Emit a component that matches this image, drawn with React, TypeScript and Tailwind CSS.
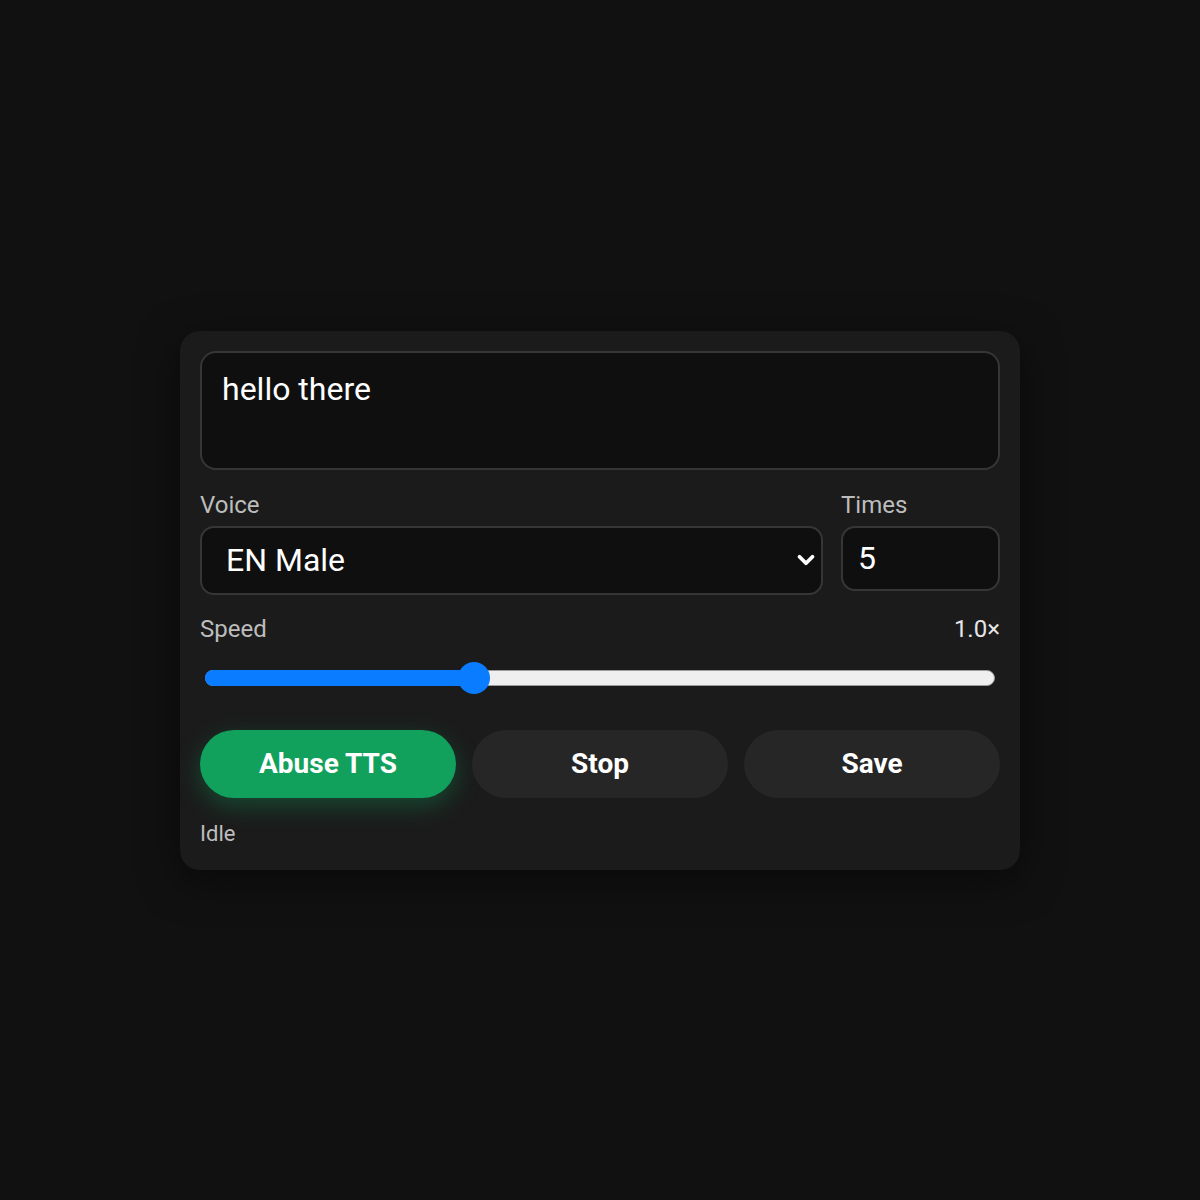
import { ChevronDown } from "lucide-react";

export default function App() {
  const speed = 1.0;
  const pct = 34;

  return (
    <div className="min-h-[1200px] w-full bg-[#111111] flex items-center justify-center font-['Roboto',sans-serif]">
      <div className="w-[840px] bg-[#1b1b1b] rounded-[20px] px-5 pt-5 pb-[22px] shadow-[0_10px_40px_rgba(0,0,0,0.5)]">
        <div className="h-[119px] bg-[#0f0f0f] border-2 border-[#363636] rounded-[16px] px-5 py-[14px] text-[32px] text-white leading-[44px]">
          hello there
        </div>

        <div className="flex gap-[18px] mt-[21px]">
          <div className="flex-1">
            <div className="text-[24px] text-[#bdbdbd] leading-[28px] mb-[7px]">Voice</div>
            <div className="h-[69px] bg-[#0f0f0f] border-2 border-[#363636] rounded-[14px] flex items-center justify-between pl-6 pr-[2px]">
              <span className="text-[32px] text-white">EN Male</span>
              <ChevronDown className="w-[26px] h-[26px] text-white" strokeWidth={3.5} />
            </div>
          </div>
          <div className="w-[159px]">
            <div className="text-[24px] text-[#bdbdbd] leading-[28px] mb-[7px]">Times</div>
            <div className="h-[65px] bg-[#0f0f0f] border-2 border-[#363636] rounded-[14px] flex items-center pl-[15px]">
              <span className="text-[32px] text-white">5</span>
            </div>
          </div>
        </div>

        <div className="flex justify-between items-center mt-[20px] text-[24px] leading-[28px]">
          <span className="text-[#bdbdbd]">Speed</span>
          <span className="text-[#e6e6e6]">{speed.toFixed(1)}×</span>
        </div>

        <div className="relative h-[32px] mt-[19px] mx-[5px]">
          <div className="absolute left-0 right-0 top-[8px] h-[16px] rounded-full bg-[#efefef] border border-[#9a9a9a]" />
          <div className="absolute left-0 top-[8px] h-[16px] rounded-full bg-[#0a7cff]" style={{ width: `${pct}%` }} />
          <div className="absolute top-0 w-[32px] h-[32px] rounded-full bg-[#0a7cff] -translate-x-1/2" style={{ left: `${pct}%` }} />
        </div>

        <div className="grid grid-cols-3 gap-4 mt-[36px]">
          <button className="h-[68px] rounded-full bg-[#12a15d] text-white text-[28px] font-bold shadow-[0_8px_24px_rgba(18,161,93,0.35)]">
            Abuse TTS
          </button>
          <button className="h-[68px] rounded-full bg-[#262626] text-white text-[28px] font-bold">Stop</button>
          <button className="h-[68px] rounded-full bg-[#262626] text-white text-[28px] font-bold">Save</button>
        </div>

        <div className="mt-[22px] text-[22px] text-[#bdbdbd] leading-[28px]">Idle</div>
      </div>
    </div>
  );
}
